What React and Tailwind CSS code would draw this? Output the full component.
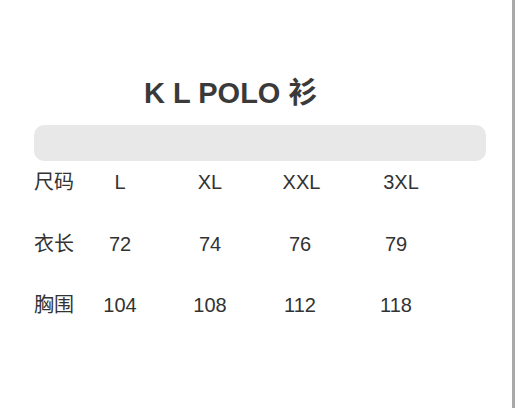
export default function App() {
  const rows = [
    ["尺码", "L", "XL", "XXL", "3XL"],
    ["衣长", "72", "74", "76", "79"],
    ["胸围", "104", "108", "112", "118"],
  ];
  const headerShift = ["", "", "pl-[3px]", "pl-[10px]"];
  return (
    <div
      className="flex w-[520px] h-[408px] bg-white text-[#333333]"
      style={{ fontFamily: '"Liberation Sans", "Noto Sans CJK SC", sans-serif' }}
    >
      <div className="w-[512px] flex flex-col">
        <div className="mt-[75px] h-[36px] leading-[36px] pl-[144px] text-[29px] font-bold text-[#3a3a3a] whitespace-nowrap">
          K L POLO 衫
        </div>
        <div className="mt-[14px] ml-[34px] w-[452px] h-[36px] rounded-[10px] bg-[#e8e8e8]" />
        <div className="mt-[11px] flex flex-col gap-[41.5px] pl-[34px]">
          {rows.map((r, i) => (
            <div
              key={i}
              className="grid grid-cols-[46px_80px_100px_80px_112px] h-[20px] leading-[20px] text-[20px] items-center"
            >
              <div className="text-left whitespace-nowrap">{r[0]}</div>
              {r.slice(1).map((c, j) => (
                <div
                  key={j}
                  className={
                    "text-center whitespace-nowrap " + (i === 0 ? headerShift[j] : "")
                  }
                >
                  {c}
                </div>
              ))}
            </div>
          ))}
        </div>
      </div>
      <div className="w-[3px] h-full bg-[#a9a9a9]" />
      <div className="flex-1 bg-white" />
    </div>
  );
}
